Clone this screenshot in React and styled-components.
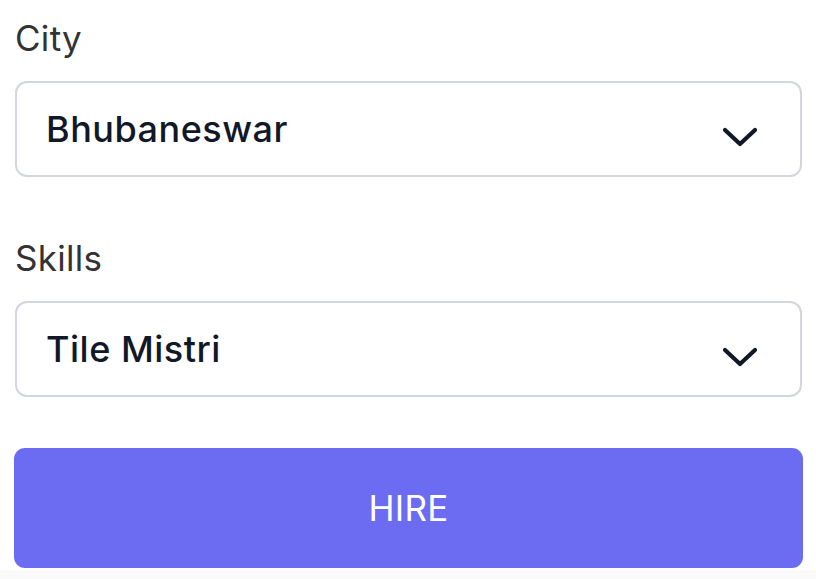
import React from 'react';
import styled, { createGlobalStyle } from 'styled-components';

const GlobalStyle = createGlobalStyle`
    body {
        margin: 0;
        background: #fafafa;
        font-family: Inter, "Noto Sans", sans-serif;
    }
`;

const Page = styled.div`
    background: #ffffff;
    padding: 14px 14px 2px 15px;
    display: flex;
    flex-direction: column;
`;

const Field = styled.div`
    display: flex;
    flex-direction: column;
    margin-bottom: ${(props) => props.$gap}px;
`;

const Label = styled.label`
    font-size: 35px;
    line-height: 48px;
    color: #333333;
    margin-bottom: 19px;
    letter-spacing: 0.3px;
`;

const SelectBox = styled.div`
    height: 96px;
    border: 2px solid #d4d6dd;
    border-radius: 12px;
    display: flex;
    align-items: center;
    justify-content: space-between;
    padding: 0 42px 0 29px;
    box-sizing: border-box;
    background: #ffffff;
`;

const Value = styled.span`
    font-size: 36px;
    font-weight: 450;
    letter-spacing: 0.5px;
    color: #111827;
`;

const HireButton = styled.button`
    height: 120px;
    margin-right: -1px;
    margin-left: -1px;
    border: none;
    border-radius: 11px;
    background: #6b6cf1;
    color: #ffffff;
    font-family: Inter, "Noto Sans", sans-serif;
    font-size: 35px;
    font-weight: 400;
    letter-spacing: 0.3px;
`;

const ChevronIcon = styled.svg`
    margin-top: 16px;
    flex-shrink: 0;
`;

const Chevron = () => (
    <ChevronIcon width="36" height="20" viewBox="0 0 36 20" fill="none">
        <polyline points="3,3 18,17 33,3" stroke="#111827" strokeWidth="4.2" strokeLinecap="round" strokeLinejoin="round" />
    </ChevronIcon>
);

const Select = ({ label, value, gap }) => (
    <Field $gap={gap}>
        <Label>{label}</Label>
        <SelectBox>
            <Value>{value}</Value>
            <Chevron />
        </SelectBox>
    </Field>
);

const App = () => {
    return (
        <>
            <GlobalStyle />
            <Page>
                <Select label="City" value="Bhubaneswar" gap={57} />
                <Select label="Skills" value="Tile Mistri" gap={51} />
                <HireButton>HIRE</HireButton>
            </Page>
        </>
    );
};

export default App;
